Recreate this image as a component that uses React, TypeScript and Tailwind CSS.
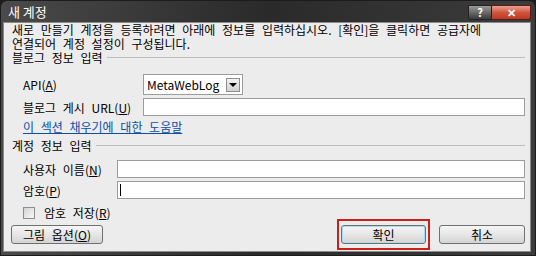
const font = { fontFamily: '"Noto Sans CJK KR", "Liberation Sans", sans-serif' };

function Input({ className = '', children }: { className?: string; children?: React.ReactNode }) {
  return (
    <div className={`h-[18px] border border-[#9c9c9c] bg-white ${className}`}>{children}</div>
  );
}

function Button({ label, hot, className = '' }: { label: string; hot?: string; className?: string }) {
  return (
    <div
      className={`flex h-[19px] items-center justify-center rounded-[3px] border border-[#707070] bg-gradient-to-b from-[#f6f6f6] via-[#e6e6e6] to-[#d4d4d4] text-[12px] text-black ${className}`}
    >
      {label}
      {hot && (
        <>
          (<span className="underline">{hot}</span>)
        </>
      )}
    </div>
  );
}

function Section({ title }: { title: string }) {
  return (
    <div className="flex items-center gap-1 pr-[5px]">
      <span>{title}</span>
      <div className="h-px flex-1 border-t border-[#bcbcbc]" />
    </div>
  );
}

export default function App() {
  return (
    <div className="h-[256px] w-[536px] overflow-hidden bg-[#1c1c1c] p-[1px]" style={font}>
      <div className="flex h-full flex-col rounded-t-[6px] bg-gradient-to-r from-[#4a4a4a] via-[#2a2a2a] to-[#3c3c3c]">
        {/* title bar */}
        <div className="flex h-[23px] justify-between pl-[7px] pr-[4px]">
          <span className="self-center text-[13px] text-white">새 계정</span>
          <div className="mt-[4px] flex h-[15px]">
            <div className="flex w-[24px] items-center justify-center rounded-bl-[3px] border border-[#222] bg-gradient-to-b from-[#9a9a9a] to-[#3c3c3c] text-[11px] font-bold text-white">
              ?
            </div>
            <div className="flex w-[39px] items-center justify-center rounded-br-[3px] border border-l-0 border-[#5a1c14] bg-gradient-to-b from-[#e8a090] via-[#d2543e] to-[#b83a26] text-[11px] font-bold text-white">
              ✕
            </div>
          </div>
        </div>
        {/* body */}
        <div className="mb-[3px] ml-[2px] mr-[4px] flex flex-1 flex-col border border-[#8a8a8a] bg-[#ececec] text-[12px] leading-[13px] text-black [word-spacing:4px]">
          <p className="pl-[8px] pr-2 leading-[14px]">
            새로 만들기 계정을 등록하려면 아래에 정보를 입력하십시오. [확인]을 클릭하면 공급자에
            <br />
            연결되어 계정 설정이 구성됩니다.
          </p>
          <div className="pl-[8px]">
            <Section title="블로그 정보 입력" />
          </div>
          <div className="flex flex-col gap-[3px] pl-[19px] pr-[5px] pt-[10px]">
            <div className="flex items-center">
              <span className="w-[120px]">
                API(<span className="underline">A</span>)
              </span>
              <div className="flex h-[21px] w-[100px] items-center justify-between border border-[#9c9c9c] bg-white pl-[3px] pr-[2px]">
                <span className="[word-spacing:0]">MetaWebLog</span>
                <div className="flex h-[14px] w-[14px] items-center justify-center border border-[#8e8e8e] bg-gradient-to-b from-[#f4f4f4] to-[#d0d0d0]">
                  <div className="h-0 w-0 border-x-[4px] border-t-[4px] border-x-transparent border-t-black" />
                </div>
              </div>
            </div>
            <div className="flex items-center">
              <span className="w-[120px]">
                블로그 게시 URL(<span className="underline">U</span>)
              </span>
              <Input className="flex-1" />
            </div>
            <a className="pt-[1px] text-[#0a4fa8] underline">이 섹션 채우기에 대한 도움말</a>
          </div>
          <div className="pl-[8px] pt-[6px]">
            <Section title="계정 정보 입력" />
          </div>
          <div className="flex flex-col gap-[3px] pl-[19px] pr-[5px] pt-[8px]">
            <div className="flex items-center">
              <span className="w-[94px]">
                사용자 이름(<span className="underline">N</span>)
              </span>
              <Input className="flex-1" />
            </div>
            <div className="flex items-center">
              <span className="w-[94px]">
                암호(<span className="underline">P</span>)
              </span>
              <Input className="flex flex-1 items-center pl-[2px]">
                <div className="h-[12px] w-px bg-black" />
              </Input>
            </div>
            <div className="flex items-center gap-[9px] pl-0 pt-[4px]">
              <div className="h-[12px] w-[12px] border border-[#8e8e8e] bg-gradient-to-br from-[#d4d4d4] to-[#f8f8f8]" />
              <span>
                암호 저장(<span className="underline">R</span>)
              </span>
            </div>
          </div>
          <div className="mt-auto flex items-center pb-[1px] pl-[7px] pr-[5px]">
            <Button label="그림 옵션" hot="O" className="w-[92px]" />
            <div className="ml-auto flex items-center gap-[9px]">
              <div className="border-2 border-[#c8211a] px-[2px] py-[4px]">
                <Button label="확인" className="w-[85px] border-[#3c7fb1] shadow-[inset_0_0_0_1px_#a6dcf6]" />
              </div>
              <Button label="취소" className="w-[86px]" />
            </div>
          </div>
        </div>
      </div>
    </div>
  );
}
